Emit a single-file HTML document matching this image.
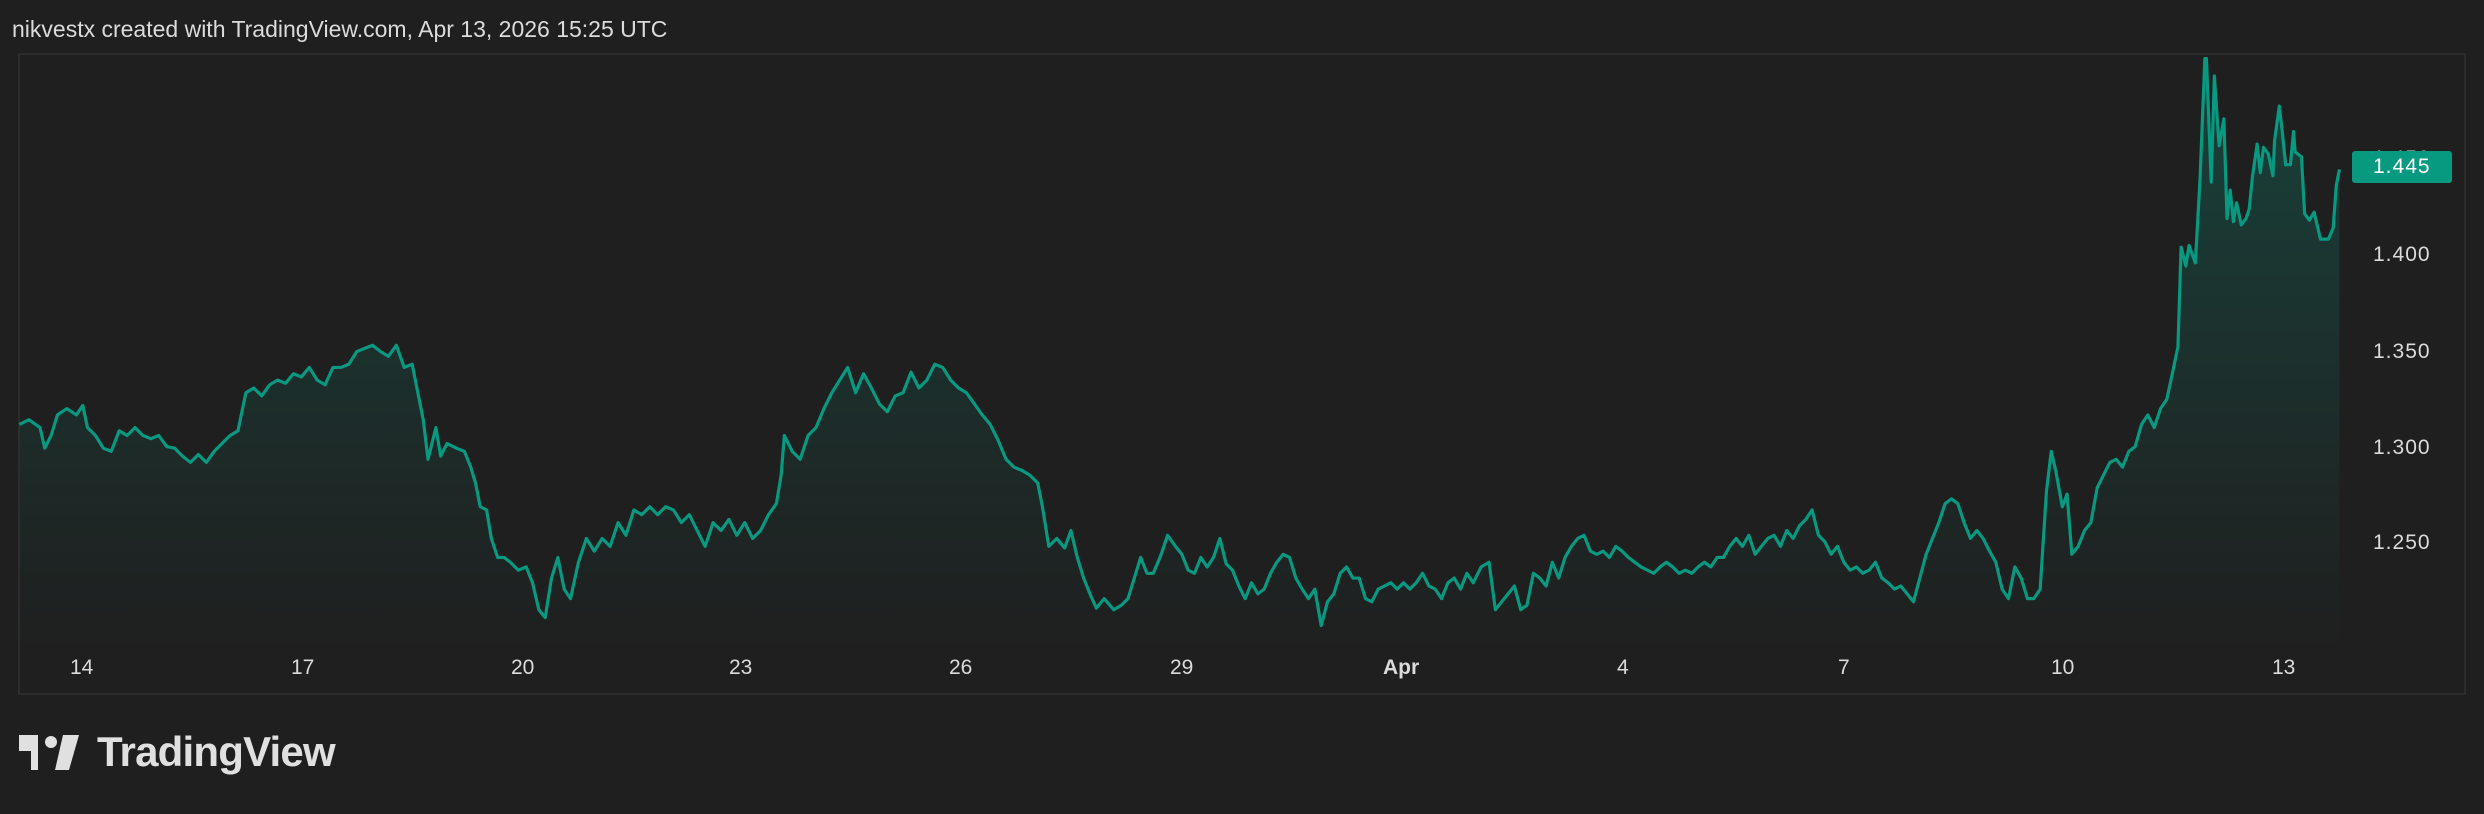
<!DOCTYPE html>
<html><head><meta charset="utf-8"><style>
html,body{margin:0;padding:0;background:#1f1f1f;width:2484px;height:814px;overflow:hidden;font-family:"Liberation Sans",sans-serif;color:#dbdbdb}
.t{position:absolute;white-space:nowrap}
.p{position:absolute;left:2373px;font-size:21px;letter-spacing:1px;line-height:24px}
</style></head><body>
<div class="t" style="left:12px;top:16px;font-size:23px;">nikvestx created with TradingView.com, Apr 13, 2026 15:25 UTC</div>
<div style="position:absolute;left:18px;top:53px;width:2444px;height:638px;border:2px solid #2c2c2c;"></div>
<svg style="position:absolute;left:0;top:0" width="2484" height="814" viewBox="0 0 1568 514">
<defs><linearGradient id="g" x1="0" y1="0" x2="0" y2="1"><stop offset="0" stop-color="#089981" stop-opacity="0.28"/><stop offset="1" stop-color="#089981" stop-opacity="0"/></linearGradient></defs>
<polygon fill="url(#g)" points="12,410 12,268 18,265 25,270 28,283 32,275 36,262 42,258 48,262 52,256 55,270 60,275 65,283 70,285 75,272 80,275 85,270 90,275 95,277 100,275 105,282 110,283 115,288 120,292 125,287 130,292 135,285 140,280 145,275 150,272 155,248 160,245 165,250 170,243 175,240 180,242 185,236 190,238 195,232 200,240 205,243 210,232 215,232 220,230 225,222 230,220 235,218 240,222 245,225 250,218 255,232 260,230 263,245 267,265 270,290 275,270 278,288 282,280 288,283 293,285 297,295 300,305 303,320 307,322 310,340 314,352 318,352 322,355 327,360 332,358 336,368 340,385 344,390 348,365 352,352 356,372 360,378 365,355 370,340 375,348 380,340 385,345 390,330 395,338 400,322 405,325 410,320 415,325 420,320 425,322 430,330 435,325 440,335 445,345 450,330 455,335 460,328 465,338 470,330 475,340 480,335 485,325 490,318 493,300 495,275 500,285 505,290 510,275 515,270 520,258 525,248 530,240 535,232 540,248 545,236 550,245 555,255 560,260 565,250 570,248 575,235 580,245 585,240 590,230 595,232 600,240 605,245 610,248 615,255 620,262 625,268 630,278 635,290 640,295 645,297 650,300 655,305 658,320 662,345 667,340 672,346 676,335 680,352 684,365 688,375 692,384 697,378 703,385 708,382 712,378 716,365 720,352 724,362 728,362 733,350 737,338 742,345 746,350 750,360 754,362 758,352 762,358 766,352 770,340 774,356 778,360 782,370 786,378 790,368 794,375 798,372 802,362 806,355 810,350 814,352 818,365 822,372 826,378 830,372 834,395 838,380 842,375 846,362 850,358 854,365 858,365 862,378 866,380 870,372 874,370 878,368 882,372 886,368 890,372 894,368 898,362 902,370 906,372 910,378 914,368 918,365 922,372 926,362 930,368 935,358 940,355 944,385 948,380 952,375 956,370 960,385 964,382 968,362 972,365 976,370 980,355 984,365 988,352 992,345 996,340 1000,338 1004,348 1008,350 1012,348 1016,352 1020,345 1024,348 1028,352 1032,355 1036,358 1040,360 1044,362 1048,358 1052,355 1056,358 1060,362 1064,360 1068,362 1072,358 1076,355 1080,358 1084,352 1088,352 1092,345 1096,340 1100,345 1104,338 1108,350 1112,345 1116,340 1120,338 1124,345 1128,335 1132,340 1136,332 1140,328 1144,322 1148,338 1152,342 1156,350 1160,345 1164,355 1168,360 1172,358 1176,362 1180,360 1184,355 1188,365 1192,368 1196,372 1200,370 1204,375 1208,380 1212,365 1216,350 1220,340 1224,330 1228,318 1232,315 1236,318 1240,330 1244,340 1248,335 1252,340 1256,348 1260,355 1264,372 1268,378 1272,358 1276,365 1280,378 1284,378 1288,372 1292,310 1295,285 1298,298 1302,320 1305,312 1308,350 1312,345 1316,335 1320,330 1324,308 1328,300 1332,292 1336,290 1340,295 1344,285 1348,282 1352,268 1356,262 1360,270 1364,258 1368,252 1371,238 1375,219 1377,156 1380,168 1382,155 1386,166 1389,112 1392,37 1393,37 1396,115 1398,48 1401,92 1404,75 1406,138 1408,120 1410,140 1412,128 1415,142 1418,138 1420,132 1422,112 1425,91 1427,109 1429,93 1432,97 1435,111 1436,89 1439,67 1441,84 1443,104 1446,104 1448,83 1449,96 1453,99 1455,135 1458,139 1461,134 1465,151 1470,151 1473,144 1475,117 1477,107 1477,410"/>
<polyline fill="none" stroke="#089981" stroke-width="2" stroke-linejoin="round" points="12,268 18,265 25,270 28,283 32,275 36,262 42,258 48,262 52,256 55,270 60,275 65,283 70,285 75,272 80,275 85,270 90,275 95,277 100,275 105,282 110,283 115,288 120,292 125,287 130,292 135,285 140,280 145,275 150,272 155,248 160,245 165,250 170,243 175,240 180,242 185,236 190,238 195,232 200,240 205,243 210,232 215,232 220,230 225,222 230,220 235,218 240,222 245,225 250,218 255,232 260,230 263,245 267,265 270,290 275,270 278,288 282,280 288,283 293,285 297,295 300,305 303,320 307,322 310,340 314,352 318,352 322,355 327,360 332,358 336,368 340,385 344,390 348,365 352,352 356,372 360,378 365,355 370,340 375,348 380,340 385,345 390,330 395,338 400,322 405,325 410,320 415,325 420,320 425,322 430,330 435,325 440,335 445,345 450,330 455,335 460,328 465,338 470,330 475,340 480,335 485,325 490,318 493,300 495,275 500,285 505,290 510,275 515,270 520,258 525,248 530,240 535,232 540,248 545,236 550,245 555,255 560,260 565,250 570,248 575,235 580,245 585,240 590,230 595,232 600,240 605,245 610,248 615,255 620,262 625,268 630,278 635,290 640,295 645,297 650,300 655,305 658,320 662,345 667,340 672,346 676,335 680,352 684,365 688,375 692,384 697,378 703,385 708,382 712,378 716,365 720,352 724,362 728,362 733,350 737,338 742,345 746,350 750,360 754,362 758,352 762,358 766,352 770,340 774,356 778,360 782,370 786,378 790,368 794,375 798,372 802,362 806,355 810,350 814,352 818,365 822,372 826,378 830,372 834,395 838,380 842,375 846,362 850,358 854,365 858,365 862,378 866,380 870,372 874,370 878,368 882,372 886,368 890,372 894,368 898,362 902,370 906,372 910,378 914,368 918,365 922,372 926,362 930,368 935,358 940,355 944,385 948,380 952,375 956,370 960,385 964,382 968,362 972,365 976,370 980,355 984,365 988,352 992,345 996,340 1000,338 1004,348 1008,350 1012,348 1016,352 1020,345 1024,348 1028,352 1032,355 1036,358 1040,360 1044,362 1048,358 1052,355 1056,358 1060,362 1064,360 1068,362 1072,358 1076,355 1080,358 1084,352 1088,352 1092,345 1096,340 1100,345 1104,338 1108,350 1112,345 1116,340 1120,338 1124,345 1128,335 1132,340 1136,332 1140,328 1144,322 1148,338 1152,342 1156,350 1160,345 1164,355 1168,360 1172,358 1176,362 1180,360 1184,355 1188,365 1192,368 1196,372 1200,370 1204,375 1208,380 1212,365 1216,350 1220,340 1224,330 1228,318 1232,315 1236,318 1240,330 1244,340 1248,335 1252,340 1256,348 1260,355 1264,372 1268,378 1272,358 1276,365 1280,378 1284,378 1288,372 1292,310 1295,285 1298,298 1302,320 1305,312 1308,350 1312,345 1316,335 1320,330 1324,308 1328,300 1332,292 1336,290 1340,295 1344,285 1348,282 1352,268 1356,262 1360,270 1364,258 1368,252 1371,238 1375,219 1377,156 1380,168 1382,155 1386,166 1389,112 1392,37 1393,37 1396,115 1398,48 1401,92 1404,75 1406,138 1408,120 1410,140 1412,128 1415,142 1418,138 1420,132 1422,112 1425,91 1427,109 1429,93 1432,97 1435,111 1436,89 1439,67 1441,84 1443,104 1446,104 1448,83 1449,96 1453,99 1455,135 1458,139 1461,134 1465,151 1470,151 1473,144 1475,117 1477,107"/>
</svg>
<div class="p" style="top:147px;color:#dbdbdb">1.450</div>
<div style="position:absolute;left:2352px;top:151px;width:100px;height:32px;background:#089981;border-radius:3px;"></div>
<div class="p" style="top:155px;color:#fff">1.445</div>
<div class="p" style="top:243px">1.400</div>
<div class="p" style="top:340px">1.350</div>
<div class="p" style="top:436px">1.300</div>
<div class="p" style="top:531px">1.250</div>
<div style="font-size:21px">
<div class="t" style="left:70px;top:656px">14</div>
<div class="t" style="left:291px;top:656px">17</div>
<div class="t" style="left:511px;top:656px">20</div>
<div class="t" style="left:729px;top:656px">23</div>
<div class="t" style="left:949px;top:656px">26</div>
<div class="t" style="left:1170px;top:656px">29</div>
<div class="t" style="left:1383px;top:656px;font-weight:bold">Apr</div>
<div class="t" style="left:1617px;top:656px">4</div>
<div class="t" style="left:1838px;top:656px">7</div>
<div class="t" style="left:2051px;top:656px">10</div>
<div class="t" style="left:2272px;top:656px">13</div>
</div>
<svg style="position:absolute;left:0;top:0" width="90" height="814">
<path d="M19 735 H38 V770 H31 V751 H19 Z" fill="#e0e0e0"/>
<circle cx="51" cy="742" r="6" fill="#e0e0e0"/>
<path d="M63 735 H79 L69 770 H55 Z" fill="#e0e0e0"/>
</svg>
<div class="t" style="left:97px;top:728px;font-size:42px;font-weight:bold;color:#e0e0e0;letter-spacing:-0.8px">TradingView</div>
</body></html>
